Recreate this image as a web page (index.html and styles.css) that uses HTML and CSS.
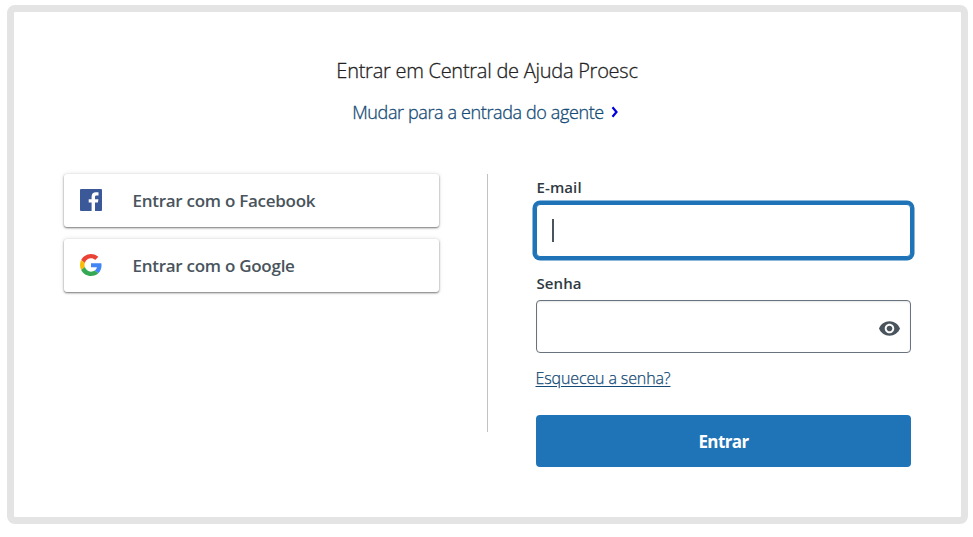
FILE: index.html
```html
<!DOCTYPE html>
<html lang="pt-BR">
<head>
<meta charset="utf-8">
<title>Entrar em Central de Ajuda Proesc</title>
<link rel="stylesheet" href="styles.css">
</head>
<body>
<main class="dialog">
  <header class="header">
    <h1 class="title">Entrar em Central de Ajuda Proesc</h1>
    <a class="switch"><span class="switch-text">Mudar para a entrada do agente</span><svg class="chevron" viewBox="0 0 8 12"><path d="M1.5 1.2 5.5 6 1.5 10.8"/></svg></a>
  </header>
  <div class="columns">
    <section class="social">
      <button class="provider">
        <svg class="logo" viewBox="0 0 22 22"><rect width="22" height="22" rx="1" fill="#3b5998"/><path fill="#fff" d="M11.6 22v-8.5H8.7v-3.3h2.9V7.7c0-2.9 1.8-4.4 4.3-4.4 1.2 0 2.3.1 2.6.1v3h-1.8c-1.4 0-1.7.7-1.7 1.7v2.1h3.4l-.5 3.3H15V22z"/></svg>
        <span class="provider-text">Entrar com o Facebook</span>
      </button>
      <button class="provider">
        <svg class="logo" viewBox="0 0 48 48"><path fill="#ea4335" d="M24 9.5c3.54 0 6.71 1.22 9.21 3.6l6.85-6.85C35.9 2.38 30.47 0 24 0 14.62 0 6.51 5.38 2.56 13.22l7.98 6.19C12.43 13.72 17.74 9.5 24 9.5z"/><path fill="#4285f4" d="M46.98 24.55c0-1.57-.15-3.09-.38-4.55H24v9.02h12.94c-.58 2.96-2.26 5.48-4.78 7.18l7.73 6c4.51-4.18 7.09-10.36 7.09-17.65z"/><path fill="#fbbc05" d="M10.53 28.59c-.48-1.45-.76-2.99-.76-4.59s.27-3.14.76-4.59l-7.98-6.19C.92 16.46 0 20.12 0 24c0 3.88.92 7.54 2.56 10.78l7.97-6.19z"/><path fill="#34a853" d="M24 48c6.48 0 11.93-2.13 15.89-5.81l-7.73-6c-2.15 1.45-4.92 2.3-8.16 2.3-6.26 0-11.57-4.22-13.47-9.91l-7.98 6.19C6.51 42.62 14.62 48 24 48z"/></svg>
        <span class="provider-text">Entrar com o Google</span>
      </button>
    </section>
    <form class="login">
      <label class="label">E-mail</label>
      <div class="field focused"><span class="caret"></span></div>
      <label class="label password">Senha</label>
      <div class="field secret"><svg class="eye" viewBox="1 4.5 22 15"><path d="M12 4.5C7 4.5 2.73 7.61 1 12c1.73 4.39 6 7.5 11 7.5s9.27-3.11 11-7.5c-1.73-4.39-6-7.5-11-7.5zM12 17c-2.76 0-5-2.24-5-5s2.24-5 5-5 5 2.24 5 5-2.24 5-5 5zm0-8c-1.66 0-3 1.34-3 3s1.34 3 3 3 3-1.34 3-3-1.34-3-3-3z"/></svg></div>
      <a class="forgot">Esqueceu a senha?</a>
      <button class="submit" type="button">Entrar</button>
    </form>
  </div>
</main>
</body>
</html>
```
FILE: styles.css
```css
* { box-sizing: border-box; }
body {
  margin: 0;
  padding: 4.5px 4.5px 0 6.5px;
  background: #fff;
  font-family: "Open Sans", "Noto Sans", sans-serif;
}
.dialog {
  width: 961px;
  height: 519.5px;
  border: 7.5px solid #e4e4e4;
  border-radius: 8px;
  background: #fff;
}
.header {
  display: flex;
  flex-direction: column;
  align-items: center;
  height: 162px;
  padding-top: 45px;
}
.title {
  margin: 0;
  font-size: 20px;
  font-weight: 300;
  letter-spacing: -.26px;
  line-height: 28px;
  color: #222;
  -webkit-text-stroke: .3px #222;
  white-space: nowrap;
}
.switch {
  display: flex;
  align-items: center;
  gap: 7px;
  margin: 14px 3px 0 0;
  line-height: 26px;
  font-size: 18px;
  font-weight: 300;
  letter-spacing: -.38px;
  color: #144a75;
  -webkit-text-stroke: .3px #144a75;
  white-space: nowrap;
}
.chevron { width: 8px; height: 12px; fill: none; stroke: #0000e0; stroke-width: 2.2; }
.columns {
  display: flex;
  padding-left: 50px;
}
.social {
  display: flex;
  flex-direction: column;
  gap: 12px;
  width: 424px;
  height: 258px;
  border-right: 1px solid #c2c2c2;
}
.provider {
  display: flex;
  align-items: center;
  width: 375px;
  height: 53px;
  padding: 0 16px;
  border: 0;
  border-radius: 3px;
  background: #fff;
  box-shadow: 0 1px 2px rgba(0, 0, 0, .5), 0 0 5px rgba(0, 0, 0, .12);
  font: 600 17px "Open Sans", "Noto Sans", sans-serif;
  letter-spacing: -.27px;
  color: #49545c;
  white-space: nowrap;
}
.logo { width: 22px; height: 22px; margin-right: 31px; }
.login {
  display: flex;
  flex-direction: column;
  align-items: flex-start;
  width: 375px;
  margin-left: 48px;
}
.label {
  height: 30px;
  padding-left: 1px;
  line-height: 27px;
  font-size: 15px;
  font-weight: 600;
  letter-spacing: .1px;
  color: #2f3941;
}
.field {
  display: flex;
  align-items: center;
  width: 375px;
  height: 53px;
  border: 1px solid #68737d;
  border-radius: 4px;
  background: #fff;
}
.focused {
  border-color: #1f73b7;
  box-shadow: 0 0 0 3.5px #1f73b7;
  padding-left: 15px;
}
.caret { width: 2px; height: 23px; background: #49545c; }
.password { margin-top: 13px; }
.secret {
  justify-content: flex-end;
  padding: 4px 10px 0 0;
  box-shadow: inset 0 1px 2px rgba(0, 0, 0, .1);
}
.eye { width: 21px; height: 15px; fill: #49545c; }
.forgot {
  margin-top: 12px;
  font-size: 16px;
  font-weight: 300;
  letter-spacing: -.12px;
  line-height: 26px;
  color: #144a75;
  -webkit-text-stroke: .25px #144a75;
  text-decoration: underline;
  text-underline-offset: 2px;
}
.submit {
  width: 375px;
  height: 52px;
  margin-top: 24px;
  padding: 2px 0 0 1px;
  border: 0;
  border-radius: 4px;
  background: #1f73b7;
  color: #fff;
  font: 700 17px "Open Sans", "Noto Sans", sans-serif;
  letter-spacing: -.6px;
}
```
